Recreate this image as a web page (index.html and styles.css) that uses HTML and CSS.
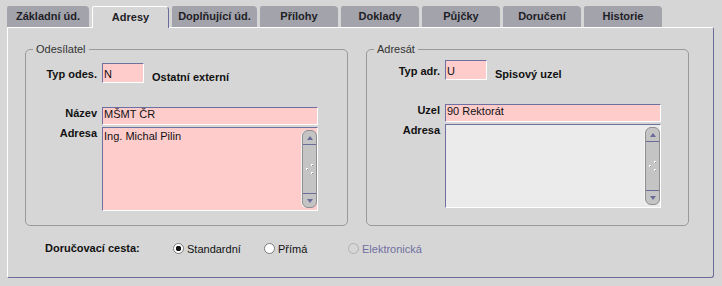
FILE: index.html
```html
<!DOCTYPE html>
<html>

<head>
  <meta charset="utf-8">
  <title>Adresy</title>
  <link rel="stylesheet" href="styles.css">
</head>

<body>
  <div class="tabs">
    <span class="tab tab-first">Základní úd.</span>
    <span class="tab curr">Adresy</span>
    <span class="tab tab-wide">Doplňující úd.</span>
    <span class="tab">Přílohy</span>
    <span class="tab">Doklady</span>
    <span class="tab">Půjčky</span>
    <span class="tab">Doručení</span>
    <span class="tab">Historie</span>
  </div>

  <div class="panel">
    <div class="groups">
      <fieldset class="group group-from">
        <legend>Odesílatel</legend>
        <div class="row row-type">
          <label class="lbl">Typ odes.</label>
          <input class="field field-short" type="text" value="N" readonly>
          <span class="note">Ostatní externí</span>
        </div>
        <div class="row row-name">
          <label class="lbl">Název</label>
          <input class="field" type="text" value="MŠMT ČR" readonly>
        </div>
        <div class="row row-memo">
          <label class="lbl">Adresa</label>
          <div class="memo">
            <div class="memo-text">Ing. Michal Pilin</div>
            <div class="scroll">
              <span class="scroll-up"></span>
              <span class="scroll-grip">
                <svg width="8" height="11" viewBox="0 0 8 11">
                  <rect x="5" y="0" width="2" height="2" fill="#fff"/>
                  <rect x="6" y="1" width="1" height="1" fill="#8a8a8a"/>
                  <rect x="0" y="4" width="2" height="2" fill="#fff"/>
                  <rect x="1" y="5" width="1" height="1" fill="#8a8a8a"/>
                  <rect x="5" y="8" width="2" height="2" fill="#fff"/>
                  <rect x="6" y="9" width="1" height="1" fill="#8a8a8a"/>
                </svg>
              </span>
              <span class="scroll-down"></span>
            </div>
          </div>
        </div>
      </fieldset>

      <fieldset class="group group-to">
        <legend>Adresát</legend>
        <div class="row row-type">
          <label class="lbl">Typ adr.</label>
          <input class="field field-short" type="text" value="U" readonly>
          <span class="note">Spisový uzel</span>
        </div>
        <div class="row row-name">
          <label class="lbl">Uzel</label>
          <input class="field" type="text" value="90 Rektorát" readonly>
        </div>
        <div class="row row-memo">
          <label class="lbl">Adresa</label>
          <div class="memo memo-off">
            <div class="memo-text"></div>
            <div class="scroll">
              <span class="scroll-up"></span>
              <span class="scroll-grip">
                <svg width="8" height="11" viewBox="0 0 8 11">
                  <rect x="5" y="0" width="2" height="2" fill="#fff"/>
                  <rect x="6" y="1" width="1" height="1" fill="#8a8a8a"/>
                  <rect x="0" y="4" width="2" height="2" fill="#fff"/>
                  <rect x="1" y="5" width="1" height="1" fill="#8a8a8a"/>
                  <rect x="5" y="8" width="2" height="2" fill="#fff"/>
                  <rect x="6" y="9" width="1" height="1" fill="#8a8a8a"/>
                </svg>
              </span>
              <span class="scroll-down"></span>
            </div>
          </div>
        </div>
      </fieldset>
    </div>

    <div class="route">
      <span class="route-lbl">Doručovací cesta:</span>
      <label class="opt"><input type="radio" name="route" checked>Standardní</label>
      <label class="opt opt-short"><input type="radio" name="route">Přímá</label>
      <label class="opt opt-off"><input type="radio" name="route" disabled>Elektronická</label>
    </div>
  </div>
</body>

</html>
```

FILE: styles.css
```css
* {
  margin: 0;
  padding: 0;
  box-sizing: border-box;
}

body {
  width: 722px;
  height: 286px;
  padding: 6px 0 0 7px;
  overflow: hidden;
  background: #d6d6d6;
  color: #111;
  font: 11px/13px "Liberation Sans", Arial, sans-serif;
}

/* zalozky */
.tabs {
  display: flex;
  gap: 3px;
}

.tab {
  width: 78px;
  height: 21px;
  line-height: 21px;
  text-align: center;
  font-weight: bold;
  color: #1e1e26;
  background: #a3a3ab;
  border-radius: 2px 4px 0 0;
}

.tab-first {
  width: 82px;
}

.tab-wide {
  width: 85px;
}

.tab.curr {
  position: relative;
  width: 77px;
  height: 22px;
  margin-bottom: -1px;
  line-height: 20px;
  background: #d6d6d6;
  border-top: 1px solid #fff;
  border-left: 1px solid #fff;
  border-right: 1px solid #6b6b99;
}

.panel {
  width: 707px;
  height: 251px;
  padding: 15px 24px 0 17px;
  border: 1px solid;
  border-color: #fff #6b6b99 #6b6b99 #fff;
  border-radius: 0 2px 3px 2px;
}

.groups {
  display: flex;
  gap: 18px;
}

.group {
  width: 323px;
  height: 183px;
  padding: 7px 0 0;
  border: 1px solid #9a9a9a;
  border-radius: 5px;
}

.group-to {
  padding-top: 4px;
}

.group legend {
  margin-left: 7px;
  padding: 0 3px;
  color: #333;
}

.row {
  display: flex;
  align-items: flex-start;
}

.lbl {
  width: 71px;
  margin-right: 5px;
  text-align: right;
  font-weight: bold;
}

.group-to .lbl {
  width: 73px;
}

.row-type {
  height: 20px;
}

.row-type .lbl {
  padding-top: 5px;
}

.note {
  margin-left: 8px;
  padding-top: 8px;
  font-weight: bold;
}

.row-name {
  margin-top: 24px;
}

.row-memo {
  margin-top: 2px;
}

.field {
  width: 216px;
  height: 18px;
  padding: 0 1px 4px;
  border: 1px solid;
  border-color: #7070a0 #fff #fff #7070a0;
  background: #ffcccc;
  color: #111;
  font: inherit;
  outline: none;
}

.field-short {
  width: 42px;
  height: 20px;
  padding: 1px 1px 0;
}

/* textove pole se scrollbarem */
.memo {
  display: flex;
  width: 216px;
  height: 84px;
  border: 1px solid;
  border-color: #7070a0 #fff #fff #7070a0;
  background: #ffcccc;
}

.memo-off {
  background: #ebebeb;
}

.memo-text {
  flex: 1;
  padding: 2px 1px;
}

.scroll {
  display: flex;
  flex-direction: column;
  width: 15px;
  margin: 2px 0;
  background: #c4c4c4;
  border: 1px solid #8e8e8e;
  border-radius: 6px;
  box-shadow: -1px 0 0 #f4f4f4;
}

.scroll-up,
.scroll-down {
  display: flex;
  align-items: center;
  justify-content: center;
  height: 14px;
}

.scroll-up {
  border-bottom: 1px solid #6b6b99;
}

.scroll-down {
  border-top: 1px solid #6b6b99;
}

.scroll-up::before,
.scroll-down::before {
  content: "";
  border-left: 3px solid transparent;
  border-right: 3px solid transparent;
}

.scroll-up::before {
  border-bottom: 4px solid #6b6b99;
}

.scroll-down::before {
  border-top: 4px solid #6b6b99;
}

.scroll-grip {
  display: flex;
  flex: 1;
  align-items: center;
  justify-content: center;
}

.scroll-grip svg {
  display: block;
}

/* dorucovaci cesta */
.route {
  display: flex;
  align-items: center;
  height: 20px;
  margin: 12px 0 0 20px;
}

.route-lbl {
  width: 128px;
  font-weight: bold;
}

.opt {
  display: flex;
  align-items: center;
  gap: 3px;
  width: 91px;
  padding-top: 2px;
}

.opt-short {
  width: 84px;
}

.opt input {
  appearance: none;
  width: 11px;
  height: 11px;
  margin: -2px 0 0;
  border: 1px solid #7d7d7d;
  border-radius: 50%;
  background: #fff;
}

.opt input:checked {
  background: radial-gradient(circle, #111 0 2.5px, #fff 3px);
}

.opt-off {
  color: #7070a0;
}

.opt-off input {
  border-color: #b0b0b0;
  background: #d6d6d6;
}
```
